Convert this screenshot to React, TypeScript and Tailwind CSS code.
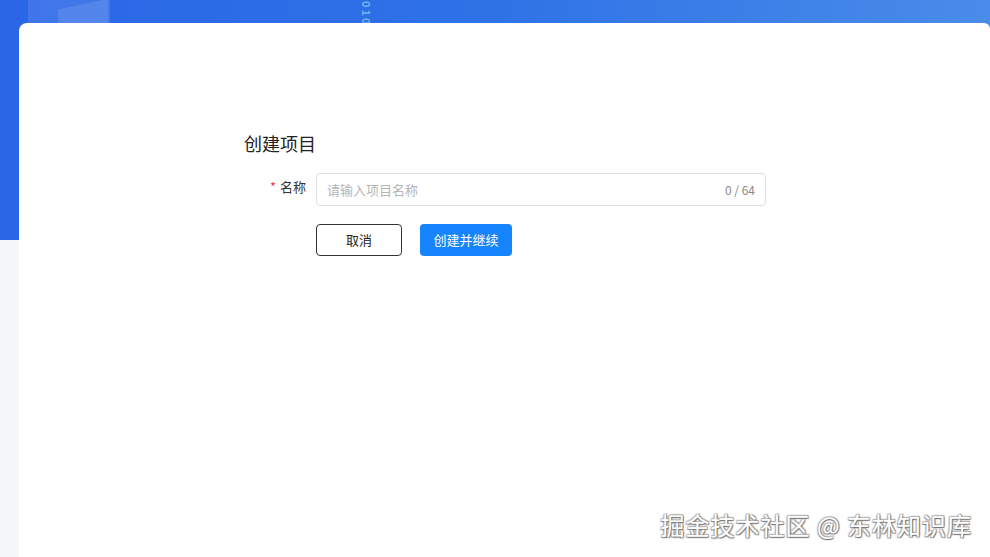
import React from 'react';

const font = "font-['Microsoft_YaHei','Noto_Sans_CJK_SC','Noto_Sans',sans-serif]";

const App: React.FC = () => {
  return (
    <div
      className={`relative w-[990px] h-[557px] overflow-hidden bg-[#f5f6f8] ${font}`}
    >
      {/* blue banner behind the card */}
      <div className="absolute inset-x-0 top-0 h-[240px] bg-[linear-gradient(90deg,#2a66e6_0%,#2f72e6_50%,#4a8ce9_100%)]">
        <div className="absolute left-[28px] top-[-10px] w-[80px] h-[44px] bg-white/10 rounded-sm" />
        <div className="absolute left-[58px] top-[4px] w-[52px] h-[30px] bg-white/10 skew-y-[-12deg]" />
        <span className="absolute left-[361px] top-[1px] text-[11px] leading-[11px] text-[#8fc4ff]/80 font-bold [writing-mode:vertical-rl] tracking-[2px]">
          010
        </span>
      </div>

      <div className="relative pl-[19px] pt-[23px] h-full">
        <div className="h-full bg-white rounded-tl-[8px] rounded-tr-[6px] pt-[108px] pl-[225px]">
          <h1 className="text-[18px] leading-[24px] text-[#222] font-normal">创建项目</h1>

          <div className="mt-[18px] flex items-start">
            <label className="w-[62px] pr-[10px] text-right text-[13px] leading-[28px] text-[#333] box-content">
              <span className="text-[#e5484d] mr-[4px]">*</span>名称
            </label>
            <div className="w-[450px] h-[33px] border border-[#dcdfe6] rounded-[4px] flex items-center justify-between px-[10px]">
              <span className="text-[13px] text-[#b5b5b5]">请输入项目名称</span>
              <span className="text-[12px] text-[#8a8a8a]">0 / 64</span>
            </div>
          </div>

          <div className="mt-[18px] pl-[72px] flex gap-[18px]">
            <button className="w-[86px] h-[32px] rounded-[4px] border border-[#333] bg-white text-[13px] text-[#222]">
              取消
            </button>
            <button className="w-[92px] h-[32px] rounded-[4px] bg-[#1684fc] text-[13px] text-white">
              创建并继续
            </button>
          </div>
        </div>
      </div>

      <div className="absolute right-[18px] bottom-[17px] text-[24px] leading-[30px] text-white [text-shadow:1px_1px_1px_#777,-1px_-1px_1px_#bbb,1px_-1px_1px_#999,-1px_1px_1px_#999] tracking-[1px]">
        掘金技术社区 @ 东林知识库
      </div>
    </div>
  );
};

export default App;
